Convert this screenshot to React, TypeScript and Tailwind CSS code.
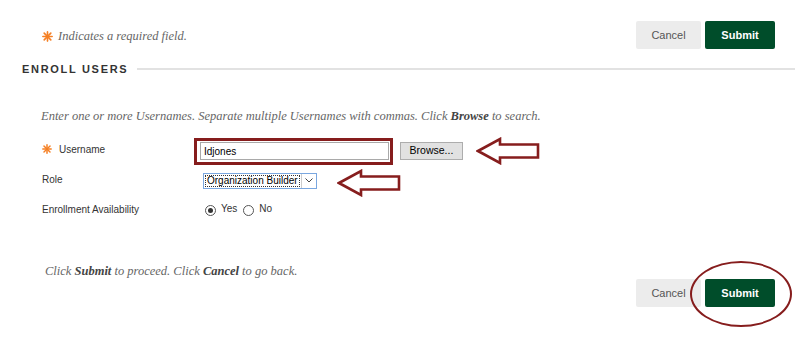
const Star = ({ size = 11 }: { size?: number }) => (
  <svg width={size} height={size} viewBox="0 0 10 10" className="shrink-0">
    <g stroke="#f58025" strokeWidth="1.5" strokeLinecap="round">
      <line x1="5" y1="0.8" x2="5" y2="9.2" />
      <line x1="0.8" y1="5" x2="9.2" y2="5" />
      <line x1="2" y1="2" x2="8" y2="8" />
      <line x1="8" y1="2" x2="2" y2="8" />
    </g>
  </svg>
);

const LeftArrow = () => (
  <svg width="64" height="28" viewBox="0 0 64 28" className="shrink-0">
    <path
      d="M2 14 L24 2 L24 7.5 L62 7.5 L62 20.5 L24 20.5 L24 26 Z"
      fill="#fff"
      stroke="#861d1d"
      strokeWidth="2.6"
      strokeLinejoin="miter"
    />
  </svg>
);

const Buttons = () => (
  <div className="flex gap-[4px] h-[28px] text-[11px]">
    <button className="w-[65px] h-full rounded-[2px] bg-[#ececec] text-[#555]">
      Cancel
    </button>
    <button className="w-[70px] h-full rounded-[2px] bg-[#004d2a] text-white font-bold">
      Submit
    </button>
  </div>
);

const serif = "italic text-[12.5px] text-[#666] font-['Liberation_Serif',Georgia,serif]";

export default function App() {
  return (
    <div className="relative w-[800px] h-[346px] overflow-hidden bg-white text-[#333] font-['Liberation_Sans',Arial,sans-serif]">
      {/* Top bar */}
      <div className="flex items-center justify-between pl-[42px] pr-[25px] pt-[21px]">
        <div className="flex items-center gap-[5px] mt-[2px]">
          <Star />
          <span className={serif}>Indicates a required field.</span>
        </div>
        <Buttons />
      </div>

      {/* Section heading */}
      <div className="flex items-center pl-[22px] pr-[5px] mt-[12px] h-[16px]">
        <h2 className="text-[11px] font-bold tracking-[1.7px] text-[#333] whitespace-nowrap">
          ENROLL USERS
        </h2>
        <div className="flex-1 h-[2px] bg-[#e2e2e2] ml-[9px] -mt-[1px]" />
      </div>

      {/* Instructions */}
      <p className={`mt-[31px] pl-[41px] leading-[16px] ${serif}`}>
        Enter one or more Usernames. Separate multiple Usernames with commas.
        Click <b className="text-[#444]">Browse</b> to search.
      </p>

      {/* Form */}
      <div className="mt-[13px] pl-[42px] text-[10px]">
        <div className="flex items-center h-[28px]">
          <div className="w-[152px] flex items-center gap-[7px] -mt-[4px]">
            <Star size={10} />
            <span>Username</span>
          </div>
          <div className="flex items-center w-[199px] h-[27px] border-[3px] border-[#861d1d] pl-[3px] pr-[1px]">
            <div className="flex-1 h-[18px] border border-[#a9a9a9] flex items-center px-[3px] text-black">
              Idjones
            </div>
          </div>
          <button className="ml-[7px] w-[63px] h-[18px] bg-[#e1e1e1] border border-[#adadad] text-[10.5px] text-black">
            Browse...
          </button>
          <div className="ml-[13px]">
            <LeftArrow />
          </div>
        </div>

        <div className="flex items-center h-[27px] mt-[2px]">
          <div className="w-[161px] -mt-[2px]">Role</div>
          <div className="flex items-center h-[16px] border border-[#7aa7e0] bg-white text-black">
            <span className="h-[12px] flex items-center px-[1px] border border-dotted border-[#333] m-[1px] bg-white leading-none">
              Organization Builder
            </span>
            <span className="h-full w-[15px] border-l border-[#ccc] flex items-center justify-center">
              <svg width="8" height="5" viewBox="0 0 8 5">
                <path d="M0.5 0.5 L4 4 L7.5 0.5" fill="none" stroke="#444" strokeWidth="1" />
              </svg>
            </span>
          </div>
          <div className="ml-[20px] mt-[4px]">
            <LeftArrow />
          </div>
        </div>

        <div className="flex items-center h-[20px] mt-[5px]">
          <div className="w-[163px]">Enrollment Availability</div>
          <span className="w-[11px] h-[11px] rounded-full border border-[#555] flex items-center justify-center mt-[3px]">
            <span className="w-[5px] h-[5px] rounded-full bg-[#333]" />
          </span>
          <span className="ml-[5px] -mt-[2px]">Yes</span>
          <span className="ml-[6px] w-[11px] h-[11px] rounded-full border border-[#555] mt-[3px]" />
          <span className="ml-[5px] -mt-[2px]">No</span>
        </div>
      </div>

      {/* Footer */}
      <p className={`mt-[45px] pl-[45px] leading-[14px] ${serif}`}>
        Click <b className="text-[#444]">Submit</b> to proceed. Click{" "}
        <b className="text-[#444]">Cancel</b> to go back.
      </p>
      <div className="flex justify-end pr-[25px] mt-[1px]">
        <div className="relative">
          <Buttons />
          <div className="absolute left-[54px] -top-[18px] w-[102px] h-[66px] rounded-[50%] border-2 border-[#861d1d]" />
        </div>
      </div>
    </div>
  );
}
